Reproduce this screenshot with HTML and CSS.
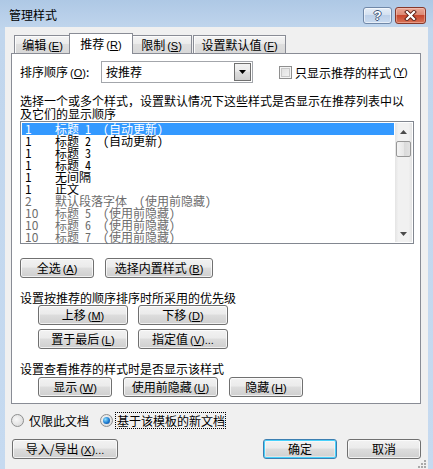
FILE: index.html
```html
<!DOCTYPE html>
<html lang="zh-CN">
<head>
    <meta charset="UTF-8">
    <title>管理样式</title>
    <link rel="stylesheet" href="styles.css">
</head>
<body>
    <div class="window">
        <div class="titlebar">
            <span class="title">管理样式</span>
            <div class="caption-buttons">
                <span class="cap-btn help">?</span>
                <span class="cap-btn close">
                    <svg width="13" height="11" viewBox="0 0 13 11">
                        <path d="M3 2 L10 9 M10 2 L3 9" stroke="#5a1e14" stroke-width="4" stroke-linecap="square"/>
                        <path d="M3 2 L10 9 M10 2 L3 9" stroke="#fff" stroke-width="2.2" stroke-linecap="square"/>
                    </svg>
                </span>
            </div>
        </div>

        <div class="client">
            <div class="tabs">
                <div class="tab tab-edit">编辑<span class="key">(<u>E</u>)</span></div>
                <div class="tab selected">推荐<span class="key">(<u>R</u>)</span></div>
                <div class="tab tab-limit">限制<span class="key">(<u>S</u>)</span></div>
                <div class="tab tab-default">设置默认值<span class="key">(<u>F</u>)</span></div>
            </div>

            <div class="panel">
                <div class="sort-row">
                    <span class="sort-label">排序顺序<span class="key">(<u>O</u>)</span>:</span>
                    <div class="combo">
                        <span class="combo-text">按推荐</span>
                        <span class="combo-btn">
                            <svg width="7" height="4" viewBox="0 0 7 4"><polygon points="0,0 7,0 3.5,4" fill="#000"/></svg>
                        </span>
                    </div>
                    <label class="check"><span class="checkbox"></span>只显示推荐的样式<span class="key">(<u>Y</u>)</span></label>
                </div>

                <p class="desc">选择一个或多个样式，设置默认情况下这些样式是否显示在推荐列表中以及它们的显示顺序</p>

                <div class="listbox">
                    <ul class="items">
                        <li class="selected"><span class="prio">1</span><span class="name">标题 1  (自动更新)</span></li>
                        <li><span class="prio">1</span><span class="name">标题 2  (自动更新)</span></li>
                        <li><span class="prio">1</span><span class="name">标题 3</span></li>
                        <li><span class="prio">1</span><span class="name">标题 4</span></li>
                        <li><span class="prio">1</span><span class="name">无间隔</span></li>
                        <li><span class="prio">1</span><span class="name">正文</span></li>
                        <li class="dim"><span class="prio">2</span><span class="name">默认段落字体  (使用前隐藏)</span></li>
                        <li class="dim"><span class="prio">10</span><span class="name">标题 5  (使用前隐藏)</span></li>
                        <li class="dim"><span class="prio">10</span><span class="name">标题 6  (使用前隐藏)</span></li>
                        <li class="dim"><span class="prio">10</span><span class="name">标题 7  (使用前隐藏)</span></li>
                    </ul>
                    <div class="scrollbar">
                        <span class="arrow">
                            <svg width="7" height="4" viewBox="0 0 7 4"><polygon points="3.5,0 7,4 0,4" fill="#4a4a4a"/></svg>
                        </span>
                        <span class="thumb"></span>
                        <span class="track"></span>
                        <span class="arrow">
                            <svg width="7" height="4" viewBox="0 0 7 4"><polygon points="0,0 7,0 3.5,4" fill="#4a4a4a"/></svg>
                        </span>
                    </div>
                </div>

                <div class="btn-row select-row">
                    <button class="btn w74">全选<span class="key">(<u>A</u>)</span></button>
                    <button class="btn w108">选择内置样式<span class="key">(<u>B</u>)</span></button>
                </div>

                <p class="caption">设置按推荐的顺序排序时所采用的优先级</p>
                <div class="priority-grid">
                    <button class="btn">上移<span class="key">(<u>M</u>)</span></button>
                    <button class="btn">下移<span class="key">(<u>D</u>)</span></button>
                    <button class="btn">置于最后<span class="key">(<u>L</u>)</span></button>
                    <button class="btn">指定值<span class="key">(<u>V</u>)...</span></button>
                </div>

                <p class="caption">设置查看推荐的样式时是否显示该样式</p>
                <div class="btn-row show-row">
                    <button class="btn w74">显示<span class="key">(<u>W</u>)</span></button>
                    <button class="btn w95">使用前隐藏<span class="key">(<u>U</u>)</span></button>
                    <button class="btn w74">隐藏<span class="key">(<u>H</u>)</span></button>
                </div>
            </div>

            <div class="scope">
                <label class="radio-label"><span class="radio"></span>仅限此文档</label>
                <label class="radio-label"><span class="radio checked"></span><span class="focus">基于该模板的新文档</span></label>
            </div>

            <div class="footer">
                <button class="btn w106">导入/导出<span class="key">(<u>X</u>)...</span></button>
                <button class="btn w74 default ok">确定</button>
                <button class="btn w74">取消</button>
            </div>

            <svg class="grip" width="11" height="11" viewBox="0 0 11 11">
                <g fill="#a9a9a9">
                    <rect x="8" y="1" width="2" height="2"/>
                    <rect x="5" y="4" width="2" height="2"/><rect x="8" y="4" width="2" height="2"/>
                    <rect x="2" y="7" width="2" height="2"/><rect x="5" y="7" width="2" height="2"/><rect x="8" y="7" width="2" height="2"/>
                </g>
            </svg>
        </div>
    </div>
</body>
</html>
```

FILE: styles.css
```css
* {
    box-sizing: border-box;
}
body {
    margin: 0;
    font-family: "Noto Sans CJK SC", "Liberation Sans", sans-serif;
    font-size: 12px;
    line-height: 13px;
    color: #000;
}
p {
    margin: 0;
}
.window {
    width: 433px;
    height: 469px;
    padding: 0 5px 4px;
    display: flex;
    flex-direction: column;
    background: linear-gradient(#aec8e5, #c1d6ed 30px, #c6daf0);
}

/* title bar */
.titlebar {
    height: 27px;
    flex-shrink: 0;
    display: flex;
    align-items: flex-start;
    padding: 0 2px 0 4px;
}
.title {
    padding-top: 7px;
    line-height: 16px;
}
.caption-buttons {
    margin-left: auto;
    margin-top: 7px;
    display: flex;
    gap: 3px;
}
.cap-btn {
    height: 17px;
    border-radius: 3px;
    display: flex;
    align-items: center;
    justify-content: center;
}
.help {
    width: 29px;
    border: 1px solid #7088a8;
    background: linear-gradient(#e6eef8, #d4e1f1 45%, #bdd0e9 50%, #cadbf0);
    box-shadow: inset 0 0 0 1px rgba(255, 255, 255, 0.55);
    font-family: "Liberation Sans", sans-serif;
    font-weight: bold;
    font-size: 13px;
    color: #fff;
    text-shadow: 1px 0 0 #41587a, -1px 0 0 #41587a, 0 1px 0 #41587a, 0 -1px 0 #41587a;
}
.close {
    width: 31px;
    border: 1px solid #86392b;
    background: linear-gradient(#eaa897, #dc8a75 45%, #c8472d 50%, #d77256);
    box-shadow: inset 0 0 0 1px rgba(255, 220, 210, 0.4);
}

/* client area */
.client {
    flex: 1;
    display: flex;
    flex-direction: column;
    padding: 6px 7px 0 6px;
    background: #f0f0f0;
}

/* tabs */
.tabs {
    display: flex;
    align-items: flex-end;
    height: 21px;
    margin: 0 0 -1px 3px;
    position: relative;
    z-index: 1;
}
.tab {
    height: 18px;
    margin-bottom: 1px;
    line-height: 17px;
    text-align: center;
    border: 1px solid #898c95;
    border-bottom: none;
    background: linear-gradient(#f4f4f4, #ebebeb 45%, #dedede 50%, #d8d8d8);
    box-shadow: inset 1px 1px 0 #fcfcfc;
}
.tab-edit {
    width: 57px;
}
.tab.selected {
    width: 64px;
    height: 21px;
    margin: 0 -2px;
    line-height: 19px;
    background: #fff;
    box-shadow: none;
    position: relative;
    z-index: 2;
}
.tab-limit {
    width: 61px;
}
.tab-default {
    width: 93px;
    margin-left: 1px;
}

.key {
    font-family: "Liberation Sans", sans-serif;
    font-size: 11px;
    margin-left: 2px;
}
.key u {
    text-underline-offset: 1px;
}

/* panel */
.panel {
    height: 351px;
    flex-shrink: 0;
    border: 1px solid #898c95;
    background: #fff;
    padding: 0 6px 0 8px;
}
.sort-row {
    display: flex;
    align-items: center;
    height: 22px;
    margin-top: 7px;
}
.sort-label {
    width: 81px;
}
.combo {
    width: 152px;
    height: 22px;
    display: flex;
    border: 1px solid #a3a6ab;
    background: #fff;
    padding: 1px;
}
.combo-text {
    flex: 1;
    padding-left: 3px;
    line-height: 18px;
}
.combo-btn {
    width: 17px;
    display: flex;
    align-items: center;
    justify-content: center;
    border: 1px solid #707070;
    background: linear-gradient(#f2f2f2, #ebebeb 45%, #dddddd 50%, #cfcfcf);
}
.check {
    display: flex;
    align-items: center;
    margin-left: 26px;
}
.checkbox {
    width: 13px;
    height: 13px;
    margin-right: 3px;
    border: 1px solid #8f8f8f;
    background: linear-gradient(135deg, #dcdcdc, #f6f6f6);
    box-shadow: inset 0 0 0 1px #f4f4f4, inset 0 0 0 2px #c8c8c8;
}
.desc {
    margin-top: 11px;
}

/* style list */
.listbox {
    display: flex;
    height: 123px;
    margin-top: 1px;
    padding: 1px;
    border: 1px solid #828790;
    background: #fff;
}
.items {
    width: 372px;
    margin: 0 1px 0 0;
    padding: 0;
    list-style: none;
}
.items li {
    display: flex;
    height: 12px;
    line-height: 12px;
    white-space: pre;
}
.items li.selected {
    background: #3399ff;
    color: #fff;
}
.items li.dim {
    color: #6d6d6d;
}
.prio {
    width: 33px;
    padding-left: 3px;
}
.name {
    font-family: "Noto Sans Mono CJK SC", "Noto Sans CJK SC", sans-serif;
}
.scrollbar {
    width: 17px;
    display: flex;
    flex-direction: column;
    background: linear-gradient(90deg, #e4e4e4, #f1f1f1 20%, #f1f1f1 80%, #e4e4e4);
}
.arrow {
    height: 17px;
    display: flex;
    align-items: center;
    justify-content: center;
}
.thumb {
    height: 16px;
    margin: 1px 1px 0;
    border: 1px solid #979797;
    border-radius: 2px;
    background: linear-gradient(90deg, #f4f4f4, #e8e8e8 50%, #d9d9d9 50%, #e2e2e2);
}
.track {
    flex: 1;
}

/* buttons */
.btn {
    height: 20px;
    padding: 0;
    font: inherit;
    line-height: 18px;
    color: #000;
    border: 1px solid #707070;
    border-radius: 3px;
    background: linear-gradient(#f2f2f2, #ebebeb 45%, #dddddd 50%, #cfcfcf);
    box-shadow: inset 0 0 0 1px rgba(255, 255, 255, 0.7);
}
.btn.default {
    border-color: #3c7fb1;
    box-shadow: inset 0 0 0 1px #48d1fb, inset 0 0 0 2px rgba(255, 255, 255, 0.4);
}
.w74 {
    width: 74px;
}
.w95 {
    width: 95px;
}
.w106 {
    width: 106px;
}
.w108 {
    width: 108px;
}
.btn-row {
    display: flex;
    gap: 11px;
}
.select-row {
    margin-top: 14px;
}
.caption {
    margin-top: 13px;
}
.priority-grid {
    display: grid;
    grid-template-columns: 90px 90px;
    gap: 4px 10px;
    margin: 1px 0 0 18px;
}
.show-row {
    margin: 2px 0 0 18px;
}

/* scope radios */
.scope {
    display: flex;
    align-items: center;
    height: 17px;
    margin-top: 8px;
    gap: 11px;
}
.radio-label {
    display: flex;
    align-items: center;
}
.radio {
    width: 13px;
    height: 13px;
    margin-right: 5px;
    border-radius: 50%;
    border: 1px solid #8e8f8f;
    background: radial-gradient(circle at 40% 40%, #f8f8f8, #d4d4d4);
    display: flex;
    align-items: center;
    justify-content: center;
}
.radio.checked {
    margin-right: 2px;
}
.radio.checked::after {
    content: "";
    width: 7px;
    height: 7px;
    border-radius: 50%;
    background: radial-gradient(circle at 35% 35%, #8ee0ff, #1c7ad0 55%, #0d3f85);
}
.focus {
    border: 1px dotted #000;
    padding: 1px 0 1px 1px;
    line-height: 13px;
}

/* footer */
.footer {
    display: flex;
    gap: 10px;
    margin: 10px 0 0 1px;
}
.footer .ok {
    margin-left: auto;
}

.grip {
    align-self: flex-end;
    margin: auto -6px 1px 0;
}
```
